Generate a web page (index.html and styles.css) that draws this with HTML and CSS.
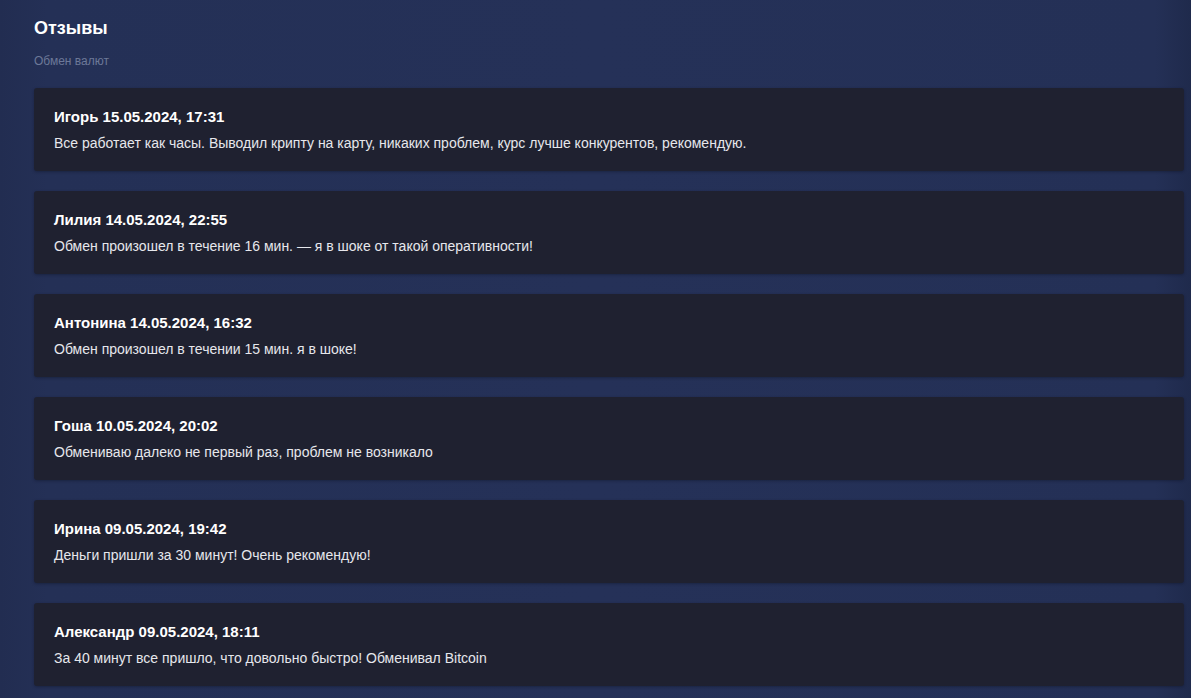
FILE: index.html
```html
<!DOCTYPE html>
<html lang="ru">
<head>
<meta charset="utf-8">
<title>Отзывы</title>
<link rel="stylesheet" href="styles.css">
</head>
<body>
<main class="page">
  <h1 class="title">Отзывы</h1>
  <p class="subtitle">Обмен валют</p>
  <ul class="reviews">
    <li class="card"><div class="name">Игорь 15.05.2024, 17:31</div><div class="text">Все работает как часы. Выводил крипту на карту, никаких проблем, курс лучше конкурентов, рекомендую.</div></li>
    <li class="card"><div class="name">Лилия 14.05.2024, 22:55</div><div class="text">Обмен произошел в течение 16 мин. — я в шоке от такой оперативности!</div></li>
    <li class="card"><div class="name">Антонина 14.05.2024, 16:32</div><div class="text">Обмен произошел в течении 15 мин. я в шоке!</div></li>
    <li class="card"><div class="name">Гоша 10.05.2024, 20:02</div><div class="text">Обмениваю далеко не первый раз, проблем не возникало</div></li>
    <li class="card"><div class="name">Ирина 09.05.2024, 19:42</div><div class="text">Деньги пришли за 30 минут! Очень рекомендую!</div></li>
    <li class="card"><div class="name">Александр 09.05.2024, 18:11</div><div class="text">За 40 минут все пришло, что довольно быстро! Обменивал Bitcoin</div></li>
  </ul>
</main>
</body>
</html>
```
FILE: styles.css
```css
html, body {
  margin: 0;
  padding: 0;
  height: 100%;
}
body {
  background: #243056;
  background-image: linear-gradient(90deg, #222d51 0%, #243056 4%, #253158 50%, #243056 97%, #1f2a4c 100%);
  font-family: "Liberation Sans", Arial, sans-serif;
  overflow: hidden;
}
.page {
  padding: 18px 7px 0 34px;
}
.title {
  margin: 0;
  font-size: 18px;
  line-height: 20px;
  font-weight: 700;
  color: #ffffff;
}
.subtitle {
  margin: 16px 0 0;
  font-size: 12px;
  line-height: 14px;
  color: #6c7898;
}
.reviews {
  list-style: none;
  margin: 20px 0 0;
  padding: 0;
  display: flex;
  flex-direction: column;
  gap: 20px;
}
.card {
  background: #1f2130;
  border-radius: 3px;
  padding: 20px 20px 19px;
  box-shadow: 0 1px 3px rgba(10, 12, 25, 0.35);
}
.name {
  font-size: 15px;
  line-height: 18px;
  font-weight: 700;
  color: #ffffff;
}
.text {
  margin-top: 8px;
  font-size: 14px;
  line-height: 18px;
  color: #e6e7ec;
}
```
